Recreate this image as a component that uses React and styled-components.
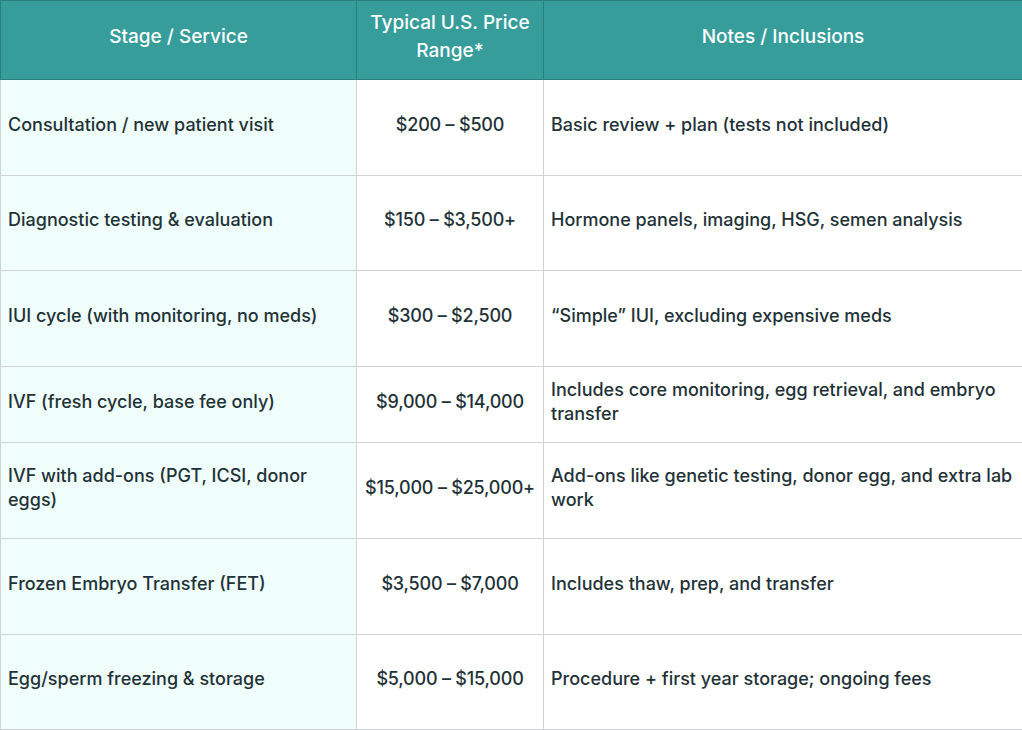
import React from 'react';
import styled, { createGlobalStyle } from 'styled-components';

const GlobalStyle = createGlobalStyle`
  html, body {
    margin: 0;
    padding: 0;
    background: #ffffff;
  }
  body {
    font-family: 'Inter', 'Liberation Sans', sans-serif;
  }
`;

const Table = styled.table`
  width: 1022px;
  border-collapse: collapse;
  table-layout: fixed;
  color: #1f3238;
`;

const HeadCell = styled.th`
  background: #369d9b;
  color: #ffffff;
  font-weight: 500;
  font-size: 19px;
  line-height: 28px;
  text-align: center;
  padding: 2px 4px 8px;
  height: 79px;
  box-sizing: border-box;
  border: 1px solid #2b7f7d;
`;

const Row = styled.tr`
  height: ${p => p.$h}px;
`;

const Cell = styled.td`
  font-size: 18px;
  font-weight: 500;
  line-height: 24px;
  padding: 0 7px 6px;
  vertical-align: middle;
  border: 1px solid #cfd3d3;
  background: ${p => (p.$mint ? '#effefb' : '#ffffff')};
`;

const PriceCell = styled(Cell)`
  text-align: center;
  white-space: nowrap;
  padding-left: 0;
  padding-right: 0;
  letter-spacing: -0.2px;
`;

const rows = [
  { stage: 'Consultation / new patient visit', price: '$200 – $500', notes: 'Basic review + plan (tests not included)', h: 96 },
  { stage: 'Diagnostic testing & evaluation', price: '$150 – $3,500+', notes: 'Hormone panels, imaging, HSG, semen analysis', h: 95 },
  { stage: 'IUI cycle (with monitoring, no meds)', price: '$300 – $2,500', notes: '“Simple” IUI, excluding expensive meds', h: 96 },
  { stage: 'IVF (fresh cycle, base fee only)', price: '$9,000 – $14,000', notes: 'Includes core monitoring, egg retrieval, and embryo transfer', h: 76 },
  { stage: 'IVF with add-ons (PGT, ICSI, donor eggs)', price: '$15,000 – $25,000+', notes: 'Add-ons like genetic testing, donor egg, and extra lab work', h: 96 },
  { stage: 'Frozen Embryo Transfer (FET)', price: '$3,500 – $7,000', notes: 'Includes thaw, prep, and transfer', h: 96 },
  { stage: 'Egg/sperm freezing & storage', price: '$5,000 – $15,000', notes: 'Procedure + first year storage; ongoing fees', h: 95 },
];

export default function App() {
  return (
    <>
      <GlobalStyle />
      <Table>
        <colgroup>
          <col style={{ width: 356 }} />
          <col style={{ width: 187 }} />
          <col style={{ width: 479 }} />
        </colgroup>
        <thead>
          <tr>
            <HeadCell>Stage / Service</HeadCell>
            <HeadCell>Typical U.S. Price Range*</HeadCell>
            <HeadCell>Notes / Inclusions</HeadCell>
          </tr>
        </thead>
        <tbody>
          {rows.map(r => (
            <Row key={r.stage} $h={r.h}>
              <Cell $mint>{r.stage}</Cell>
              <PriceCell>{r.price}</PriceCell>
              <Cell>{r.notes}</Cell>
            </Row>
          ))}
        </tbody>
      </Table>
    </>
  );
}
